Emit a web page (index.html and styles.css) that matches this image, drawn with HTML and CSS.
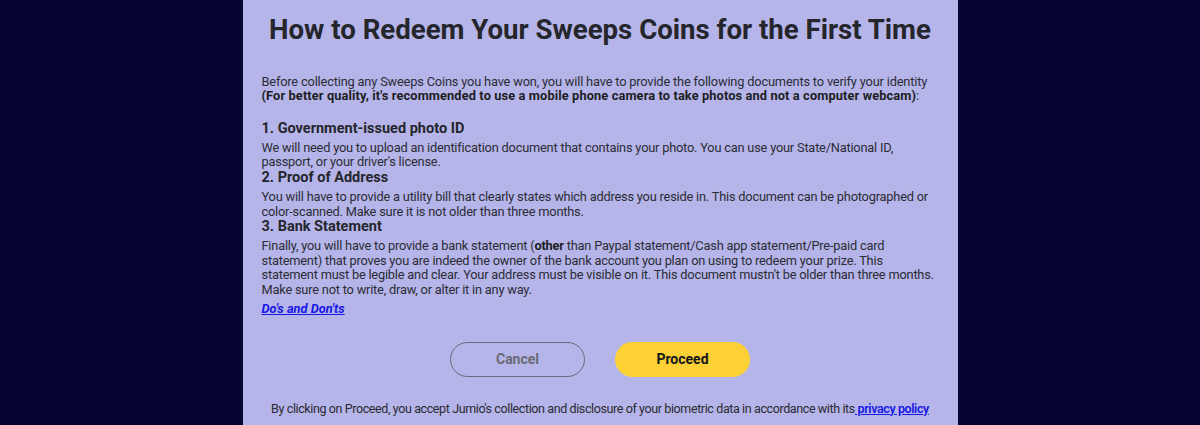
FILE: index.html
```html
<!DOCTYPE html>
<html lang="en">
<head>
<meta charset="utf-8">
<title>Redeem Sweeps Coins</title>
<link rel="stylesheet" href="styles.css">
</head>
<body>
<div class="page">
  <div class="modal">
    <h1 class="title">How to Redeem Your Sweeps Coins for the First Time</h1>
    <p class="intro">Before collecting any Sweeps Coins you have won, you will have to provide the following documents to verify your identity <b>(For better quality, it's recommended to use a mobile phone camera to take photos and not a computer webcam)</b>:</p>
    <h2 class="step">1. Government-issued photo ID</h2>
    <p class="text">We will need you to upload an identification document that contains your photo. You can use your State/National ID, passport, or your driver's license.</p>
    <h2 class="step">2. Proof of Address</h2>
    <p class="text">You will have to provide a utility bill that clearly states which address you reside in. This document can be photographed or color-scanned. Make sure it is not older than three months.</p>
    <h2 class="step">3. Bank Statement</h2>
    <p class="text">Finally, you will have to provide a bank statement (<b>other</b> than Paypal statement/Cash app statement/Pre-paid card statement) that proves you are indeed the owner of the bank account you plan on using to redeem your prize. This statement must be legible and clear. Your address must be visible on it. This document mustn't be older than three months. Make sure not to write, draw, or alter it in any way.</p>
    <a class="dos" href="#">Do's and Don'ts</a>
    <div class="actions">
      <button class="btn btn-cancel">Cancel</button>
      <button class="btn btn-proceed">Proceed</button>
    </div>
    <p class="footer">By clicking on Proceed, you accept Jumio's collection and disclosure of your biometric data in accordance with its<a href="#" class="policy"> privacy policy</a></p>
  </div>
</div>
</body>
</html>
```

FILE: styles.css
```css
html, body {
  margin: 0;
  padding: 0;
  height: 100%;
  background: #050433;
  overflow: hidden;
}
.page {
  display: flex;
  justify-content: center;
  height: 100%;
}
.modal {
  width: 715px;
  background: #b5b5e9;
  padding: 0 19px;
  box-sizing: border-box;
  font-family: Roboto, "Noto Sans", sans-serif;
  color: #2c2c36;
  height: 425px;
}
.title {
  margin: 0;
  padding-top: 13px;
  font-size: 27.6px;
  line-height: 34px;
  font-weight: 700;
  text-align: center;
  color: #25252c;
  white-space: nowrap;
}
.intro {
  margin: 28px 0 0;
  font-size: 12.8px;
  line-height: 14.4px;
  letter-spacing: -0.17px;
}
.intro b { font-weight: 700; color: #1d1d24; letter-spacing: 0.12px; }
.step {
  margin: 0 0 4px;
  font-size: 14.5px;
  line-height: 16px;
  font-weight: 700;
  color: #25252c;
}
.intro + .step { margin-top: 17px; }
.text {
  margin: 0;
  font-size: 12.8px;
  line-height: 14.6px;
  letter-spacing: -0.2px;
}
.text b { font-weight: 700; color: #1d1d24; }
.dos {
  display: inline-block;
  margin-top: -1px;
  font-size: 12.8px;
  line-height: 13px;
  font-style: italic;
  font-weight: 700;
  color: #1717e6;
}
.actions {
  display: flex;
  justify-content: center;
  gap: 30px;
  margin-top: 25px;
}
.btn {
  width: 135px;
  height: 35px;
  border-radius: 18px;
  font-family: Roboto, "Noto Sans", sans-serif;
  font-size: 14px;
  font-weight: 700;
  cursor: pointer;
}
.btn-cancel {
  background: transparent;
  border: 1.5px solid #6a6a78;
  color: #6a6a74;
}
.btn-proceed {
  background: #fdd136;
  border: none;
  color: #15151c;
}
.footer {
  margin: 24px 0 0;
  text-align: center;
  font-size: 12.5px;
  line-height: 16px;
  color: #2a2a33;
  letter-spacing: -0.39px;
  white-space: nowrap;
}
.policy {
  color: #1717e6;
  font-weight: 600;
}
```
